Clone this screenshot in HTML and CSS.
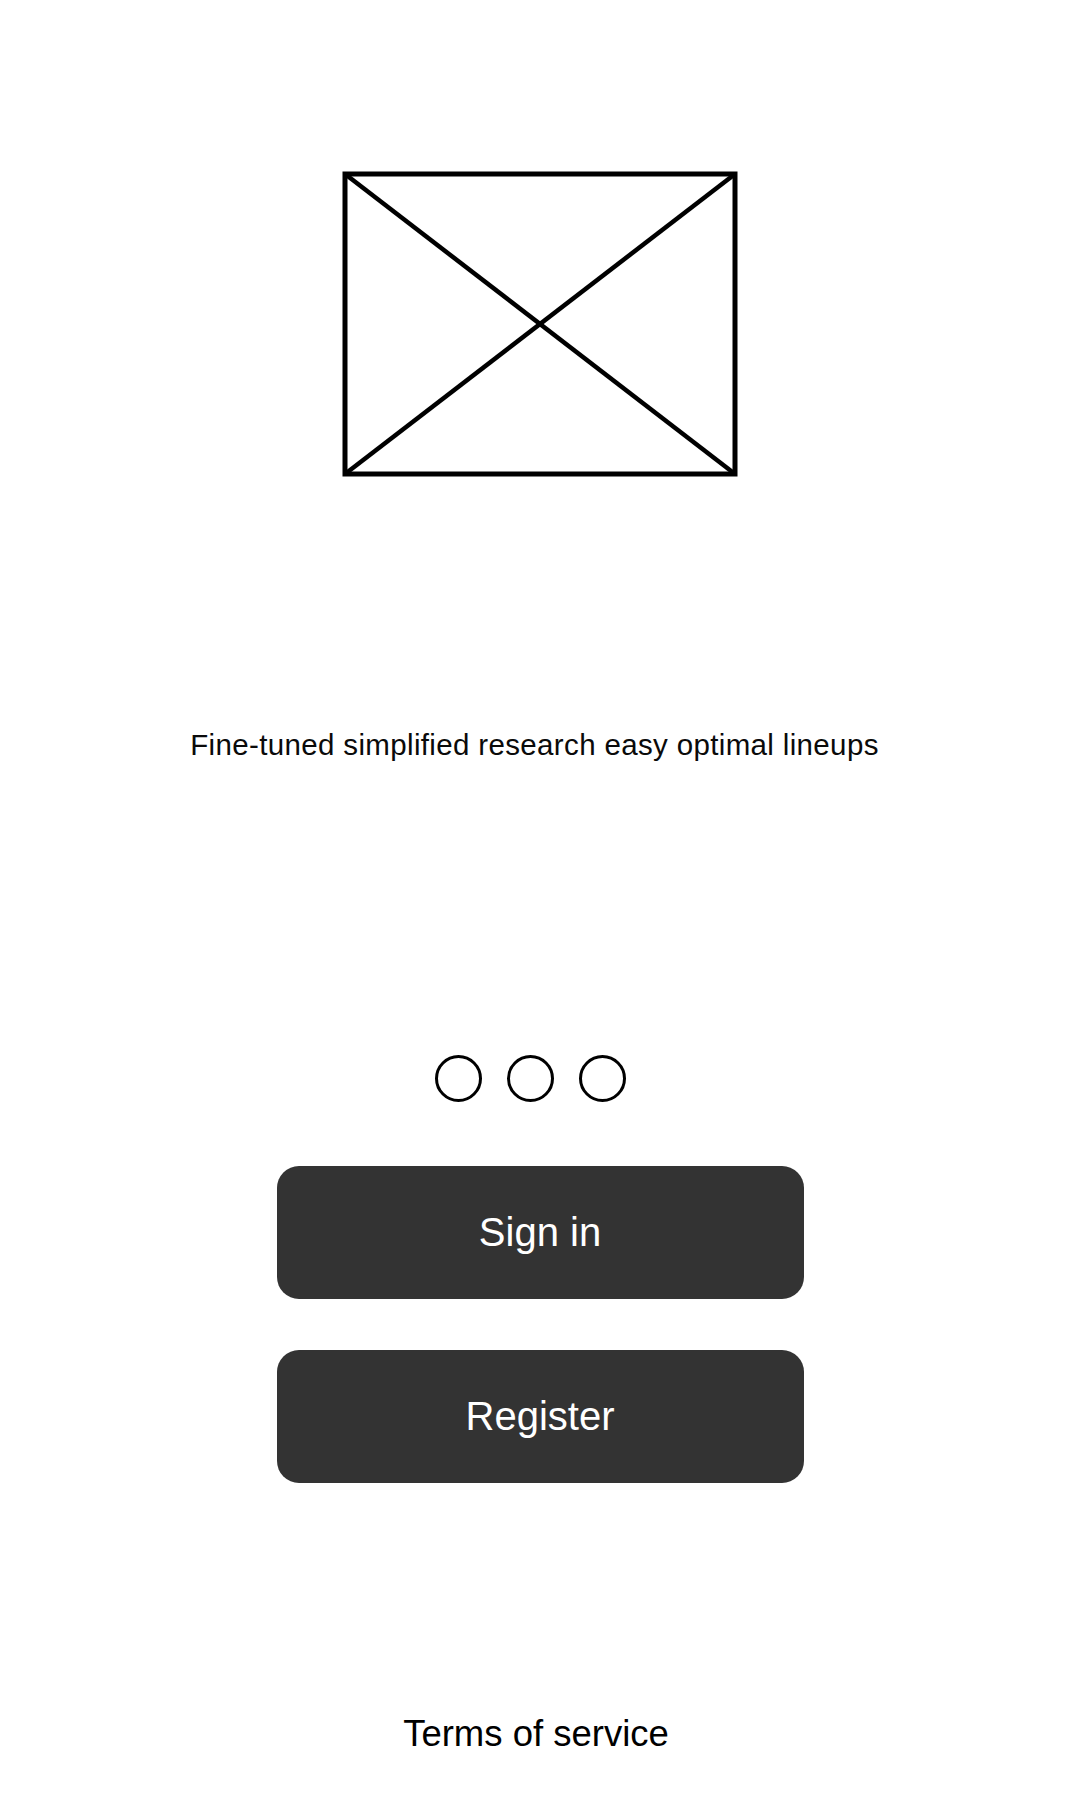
FILE: index.html
```html
<!DOCTYPE html>
<html lang="en">
<head>
<meta charset="utf-8">
<title>Welcome</title>
<link rel="stylesheet" href="styles.css">
</head>
<body>
<main class="page">
  <svg class="hero" width="396" height="306" viewBox="0 0 396 306" aria-hidden="true">
    <rect x="3" y="3" width="390" height="300" fill="none" stroke="#000" stroke-width="5"/>
    <line x1="3" y1="3" x2="393" y2="303" stroke="#000" stroke-width="4.5"/>
    <line x1="393" y1="3" x2="3" y2="303" stroke="#000" stroke-width="4.5"/>
  </svg>
  <p class="tagline">Fine-tuned simplified research easy optimal lineups</p>
  <div class="dots">
    <span class="dot"></span>
    <span class="dot"></span>
    <span class="dot"></span>
  </div>
  <button class="btn btn-signin" type="button">Sign in</button>
  <button class="btn btn-register" type="button">Register</button>
  <a class="terms" href="#">Terms of service</a>
</main>
</body>
</html>
```

FILE: styles.css
```css
* { box-sizing: border-box; }
html, body {
  margin: 0;
  padding: 0;
  background: #ffffff;
}
body {
  width: 1080px;
  height: 1800px;
  font-family: "Liberation Sans", Arial, sans-serif;
  color: #000;
}
.page {
  display: flex;
  flex-direction: column;
  align-items: center;
  padding-top: 171px;
}
.hero {
  display: block;
}
.tagline {
  margin: 251px 0 0 0;
  padding-right: 11px;
  font-size: 29.5px;
  line-height: 34px;
  letter-spacing: 0.35px;
  color: #0a0a0a;
  white-space: nowrap;
}
.dots {
  display: flex;
  gap: 25px;
  margin-top: 293px;
  padding-right: 20px;
}
.dot {
  width: 47px;
  height: 47px;
  border: 3px solid #000;
  border-radius: 50%;
}
.btn {
  display: flex;
  align-items: center;
  justify-content: center;
  width: 527px;
  height: 133px;
  border: none;
  border-radius: 22px;
  background: #333333;
  color: #ffffff;
  font-family: "Liberation Sans", Arial, sans-serif;
  font-size: 40px;
  padding: 0;
}
.btn-signin { margin-top: 64px; }
.btn-register { margin-top: 51px; }
.terms {
  margin-top: 230px;
  padding-right: 8px;
  font-size: 36.5px;
  line-height: 42px;
  color: #000;
  text-decoration: none;
}
```
